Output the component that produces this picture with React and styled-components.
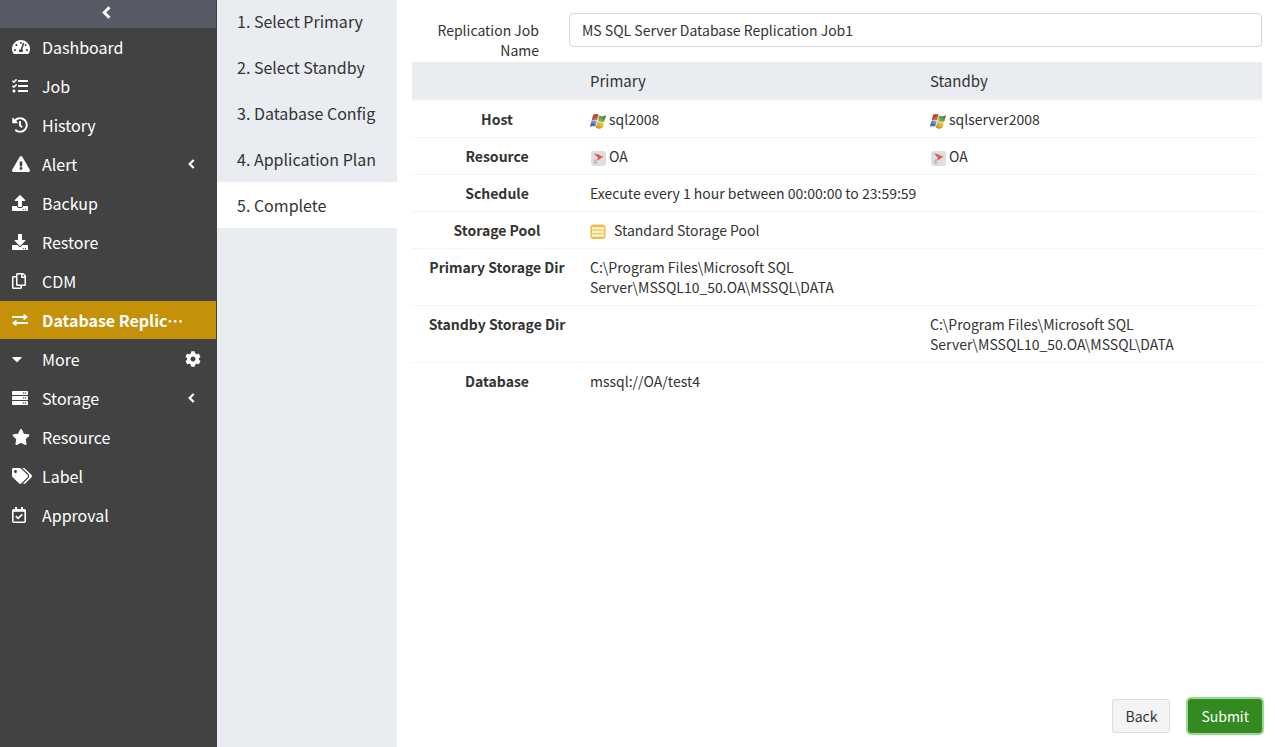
import React from "react";
import styled, { createGlobalStyle, css } from "styled-components";
import {
  FaTachometerAlt, FaTasks, FaHistory, FaExclamationTriangle, FaUpload, FaDownload,
  FaRegCopy, FaCaretDown, FaServer, FaStar, FaTags, FaCog,
} from "react-icons/fa";

const GlobalStyle = createGlobalStyle`
  *, *::before, *::after { box-sizing: border-box; }
  body {
    margin: 0;
    background: #fff;
    color: #333;
    font-family: "Noto Sans CJK SC", "Open Sans", sans-serif;
    font-size: 14px;
    line-height: 20px;
  }
  button, input { font: inherit; color: inherit; }
`;

const Page = styled.div`
  display: flex;
  min-height: 100vh;
`;

const Sidebar = styled.nav`
  flex: 0 0 217px;
  padding-right: 1px;
  background: #424242;
  color: #fff;
`;

const Collapse = styled.button`
  display: flex;
  align-items: center;
  justify-content: center;
  width: 100%;
  height: 28px;
  padding: 0 0 3px;
  border: 0;
  background: #565b66;
  color: #fff;
`;

const Menu = styled.ul`
  margin: 0;
  padding: 0;
  list-style: none;
`;

const MenuItem = styled.li`
  display: flex;
  align-items: center;
  height: 38px;
  margin-bottom: 1px;
  padding: 0 15px 0 12px;
  ${(p) => p.$active && css`
    background: #c59108;
    font-weight: 700;
  `}
`;

const MenuLink = styled.a`
  display: flex;
  align-items: center;
  flex: 1;
  min-width: 0;
  color: inherit;
  font-size: 16px;
  line-height: 38px;
  text-decoration: none;
`;

const MenuIcon = styled.span`
  display: flex;
  align-items: center;
  flex: 0 0 30px;

  svg {
    flex: none;
    width: ${(p) => p.$width || 16}px;
    height: 16px;
  }
`;

const MenuText = styled.span`
  max-width: 144px;
  overflow: hidden;
  white-space: nowrap;
  text-overflow: ellipsis;
`;

const MenuAction = styled.button`
  display: flex;
  justify-content: center;
  width: 16px;
  padding: 0;
  border: 0;
  background: none;
  color: #fff;
  font-size: 16px;
`;

const Steps = styled.ol`
  flex: 0 0 180px;
  margin: 0;
  padding: 0;
  overflow: hidden;
  list-style: none;
  background: #e9edf2;
`;

const Step = styled.li`
  height: 46px;
  padding-left: 20px;
  font-size: 16px;
  line-height: 46px;
  white-space: nowrap;
  background: ${(p) => (p.$active ? "#fff" : "transparent")};

  &:first-child { margin-top: -2px; }
`;

const Main = styled.main`
  display: flex;
  flex: 1;
  flex-direction: column;
  min-width: 0;
  padding: 13px 13px 14px 15px;
`;

const FormRow = styled.div`
  display: flex;
  align-items: flex-start;
  gap: 30px;
  margin-bottom: 2px;
`;

const FieldLabel = styled.label`
  flex: 0 0 127px;
  padding-top: 7px;
  text-align: right;
`;

const TextInput = styled.input`
  flex: 1;
  min-width: 0;
  height: 34px;
  padding: 0 12px;
  border: 1px solid #d2d6e0;
  border-radius: 4px;
  background: #fff;
  outline: none;
`;

const Summary = styled.table`
  width: 100%;
  table-layout: fixed;
  border-spacing: 0;

  th, td {
    padding: 8px;
    vertical-align: top;
    text-align: left;
  }
  thead th, thead td {
    padding-top: 9px;
    border-bottom: 2px solid #f4f4f4;
    background: #e9edf2;
    font-size: 15px;
    font-weight: 400;
  }
  thead td { width: 20%; }
  tbody th { text-align: center; }
  tbody tr:not(:last-child) > * { border-bottom: 1px solid #f4f4f4; }
`;

const WithIcon = styled.span`
  display: flex;
  align-items: center;
  gap: ${(p) => (p.$wide ? 8 : 3)}px;

  svg {
    flex: none;
    margin-top: 4px;
  }
`;

const Footer = styled.footer`
  display: flex;
  justify-content: flex-end;
  gap: 18px;
  margin-top: auto;
`;

const Button = styled.button`
  height: 34px;
  padding: 0 12px;
  border: 1px solid #ddd;
  border-radius: 3px;
  background: #f4f4f4;
  ${(p) => p.$primary && css`
    border-color: #338a20;
    background: #338a20;
    color: #fff;
    box-shadow: 0 0 0 2px #97da91;
  `}
`;

const ChevronIcon = ({ size }) => (
  <svg width={size} height={size} viewBox="0 0 10 10" fill="none" stroke="currentColor" aria-hidden="true">
    <path d="M5.7 1L1.7 5L5.7 9" strokeWidth="2.3" />
  </svg>
);

const ExchangeIcon = () => (
  <svg width="16" height="16" viewBox="0 0 16 16" fill="currentColor" aria-hidden="true">
    <path d="M0.5 4H11.5V2.2Q11.6 1.6 12.1 2L15.6 4.6Q16 5 15.6 5.4L12.1 8Q11.6 8.3 11.5 7.8V6H0.5Q0 6 0 5.5V4.5Q0 4 0.5 4Z" />
    <path d="M15.5 10H4.5V8.2Q4.4 7.6 3.9 8L0.4 10.6Q0 11 0.4 11.4L3.9 14Q4.4 14.3 4.5 13.8V12H15.5Q16 12 16 11.5V10.5Q16 10 15.5 10Z" />
  </svg>
);

const ApprovalIcon = () => (
  <svg width="14" height="16" viewBox="0 0 14 16" fill="none" stroke="currentColor" aria-hidden="true">
    <rect x="0.8" y="2.8" width="12.4" height="12.4" rx="1" strokeWidth="1.6" />
    <path d="M1 3.6H13" strokeWidth="2.4" />
    <path d="M4 0V3M10 0V3" strokeWidth="2" />
    <path d="M3.8 9.2L6.1 11.4L10.3 7.3" strokeWidth="1.7" />
  </svg>
);

const WindowsIcon = () => (
  <svg width="16" height="16" viewBox="0 0 16 16" aria-hidden="true">
    <defs>
      <linearGradient id="winRed" x1="0" y1="0" x2="1" y2="1"><stop stopColor="#a5221b" /><stop offset="1" stopColor="#ef7850" /></linearGradient>
      <linearGradient id="winGreen" x1="1" y1="0" x2="0" y2="1"><stop stopColor="#1d6c20" /><stop offset="1" stopColor="#a5d778" /></linearGradient>
      <linearGradient id="winBlue" x1="0" y1="1" x2="1" y2="0"><stop stopColor="#123f90" /><stop offset="1" stopColor="#8fc5ee" /></linearGradient>
      <linearGradient id="winYellow" x1="0" y1="1" x2="1" y2="0"><stop stopColor="#c88508" /><stop offset="1" stopColor="#ffe060" /></linearGradient>
    </defs>
    <path d="M3.2 1.8Q5.8 0.2 8.7 1.4L7 7.4Q4.6 6 1.7 7.4Z" fill="url(#winRed)" />
    <path d="M9.2 2.6Q12.2 4.4 16 2.3L14.3 8.4Q10.8 9.8 7.6 7.9Z" fill="url(#winGreen)" />
    <path d="M1.5 8Q4.3 6.6 6.8 8L5.2 13.8Q2.8 12.4 0 13.8Z" fill="url(#winBlue)" />
    <path d="M7.4 8.6Q10.6 10.4 14.2 8.9L12.7 14.4Q9 16.9 5.8 14.4Z" fill="url(#winYellow)" />
  </svg>
);

const SqlServerIcon = () => (
  <svg width="16" height="16" viewBox="0 0 16 16" aria-hidden="true">
    <rect x="1" y="1" width="15" height="15" rx="3" fill="#dedfdf" />
    <path d="M4 3L13.5 6.6L7 10.8L8 7.4Z" fill="#e6a6a0" />
    <path d="M4 3Q5.6 5 8 6.2L13.6 6.6Q10.5 8 7 10.8L8.4 7.5Q5.5 6.3 4 3Z" fill="#d94840" />
    <path d="M7 8.8Q3.4 10.2 3.6 12.4Q4.3 14 8.2 14Q5.5 12.2 7 8.8Z" fill="#b6bdc4" />
    <path d="M5 3.8L10 5L9.4 6L7 5.4Z" fill="#d94840" />
  </svg>
);

const PoolIcon = () => (
  <svg width="16" height="16" viewBox="0 0 16 16" aria-hidden="true">
    <rect x="0.5" y="0.5" width="15" height="14.5" rx="3" fill="#efba48" />
    <rect x="2" y="3" width="12" height="2.6" fill="#fff3cc" />
    <rect x="2" y="6.6" width="12" height="2.6" fill="#fff3cc" />
    <rect x="2" y="10.2" width="12" height="2.6" fill="#fff3cc" />
    <path d="M4.5 3V12.8" stroke="#f5d78e" strokeWidth="0.6" />
  </svg>
);

const MENU = [
  { text: "Dashboard", icon: <FaTachometerAlt />, iconWidth: 18 },
  { text: "Job", icon: <FaTasks /> },
  { text: "History", icon: <FaHistory /> },
  { text: "Alert", icon: <FaExclamationTriangle />, iconWidth: 18, action: "expand" },
  { text: "Backup", icon: <FaUpload /> },
  { text: "Restore", icon: <FaDownload /> },
  { text: "CDM", icon: <FaRegCopy />, iconWidth: 14 },
  { text: "Database Replication", icon: <ExchangeIcon />, active: true },
  { text: "More", icon: <FaCaretDown />, iconWidth: 10, action: "settings" },
  { text: "Storage", icon: <FaServer />, action: "expand" },
  { text: "Resource", icon: <FaStar />, iconWidth: 18 },
  { text: "Label", icon: <FaTags />, iconWidth: 20 },
  { text: "Approval", icon: <ApprovalIcon />, iconWidth: 14 },
];

const STEPS = ["Select Primary", "Select Standby", "Database Config", "Application Plan", "Complete"];

const DATA_DIR = "C:\\Program Files\\Microsoft SQL Server\\MSSQL10_50.OA\\MSSQL\\DATA";

export default function App() {
  return (
    <>
      <GlobalStyle />
      <Page>
        <Sidebar aria-label="Main menu">
          <Collapse type="button" aria-label="Collapse menu"><ChevronIcon size={13} /></Collapse>
          <Menu>
            {MENU.map(({ text, icon, iconWidth, active, action }) => (
              <MenuItem key={text} $active={active}>
                <MenuLink href="#" aria-current={active ? "page" : undefined}>
                  <MenuIcon $width={iconWidth}>{icon}</MenuIcon>
                  <MenuText>{text}</MenuText>
                </MenuLink>
                {action && (
                  <MenuAction type="button" aria-label={`${text} ${action}`}>
                    {action === "expand" ? <ChevronIcon size={10} /> : <FaCog />}
                  </MenuAction>
                )}
              </MenuItem>
            ))}
          </Menu>
        </Sidebar>
        <Steps>
          {STEPS.map((step, i) => (
            <Step key={step} $active={i === 4}>{`${i + 1}. ${step}`}</Step>
          ))}
        </Steps>
        <Main>
          <FormRow>
            <FieldLabel htmlFor="job-name">Replication Job Name</FieldLabel>
            <TextInput id="job-name" type="text" defaultValue="MS SQL Server Database Replication Job1" />
          </FormRow>
          <Summary>
            <thead>
              <tr>
                <td />
                <th scope="col">Primary</th>
                <th scope="col">Standby</th>
              </tr>
            </thead>
            <tbody>
              <tr>
                <th scope="row">Host</th>
                <td><WithIcon><WindowsIcon />sql2008</WithIcon></td>
                <td><WithIcon><WindowsIcon />sqlserver2008</WithIcon></td>
              </tr>
              <tr>
                <th scope="row">Resource</th>
                <td><WithIcon><SqlServerIcon />OA</WithIcon></td>
                <td><WithIcon><SqlServerIcon />OA</WithIcon></td>
              </tr>
              <tr>
                <th scope="row">Schedule</th>
                <td colSpan={2}>Execute every 1 hour between 00:00:00 to 23:59:59</td>
              </tr>
              <tr>
                <th scope="row">Storage Pool</th>
                <td colSpan={2}><WithIcon $wide><PoolIcon />Standard Storage Pool</WithIcon></td>
              </tr>
              <tr>
                <th scope="row">Primary Storage Dir</th>
                <td>{DATA_DIR}</td>
                <td />
              </tr>
              <tr>
                <th scope="row">Standby Storage Dir</th>
                <td />
                <td>{DATA_DIR}</td>
              </tr>
              <tr>
                <th scope="row">Database</th>
                <td>mssql://OA/test4</td>
                <td />
              </tr>
            </tbody>
          </Summary>
          <Footer>
            <Button type="button">Back</Button>
            <Button type="submit" $primary>Submit</Button>
          </Footer>
        </Main>
      </Page>
    </>
  );
}
